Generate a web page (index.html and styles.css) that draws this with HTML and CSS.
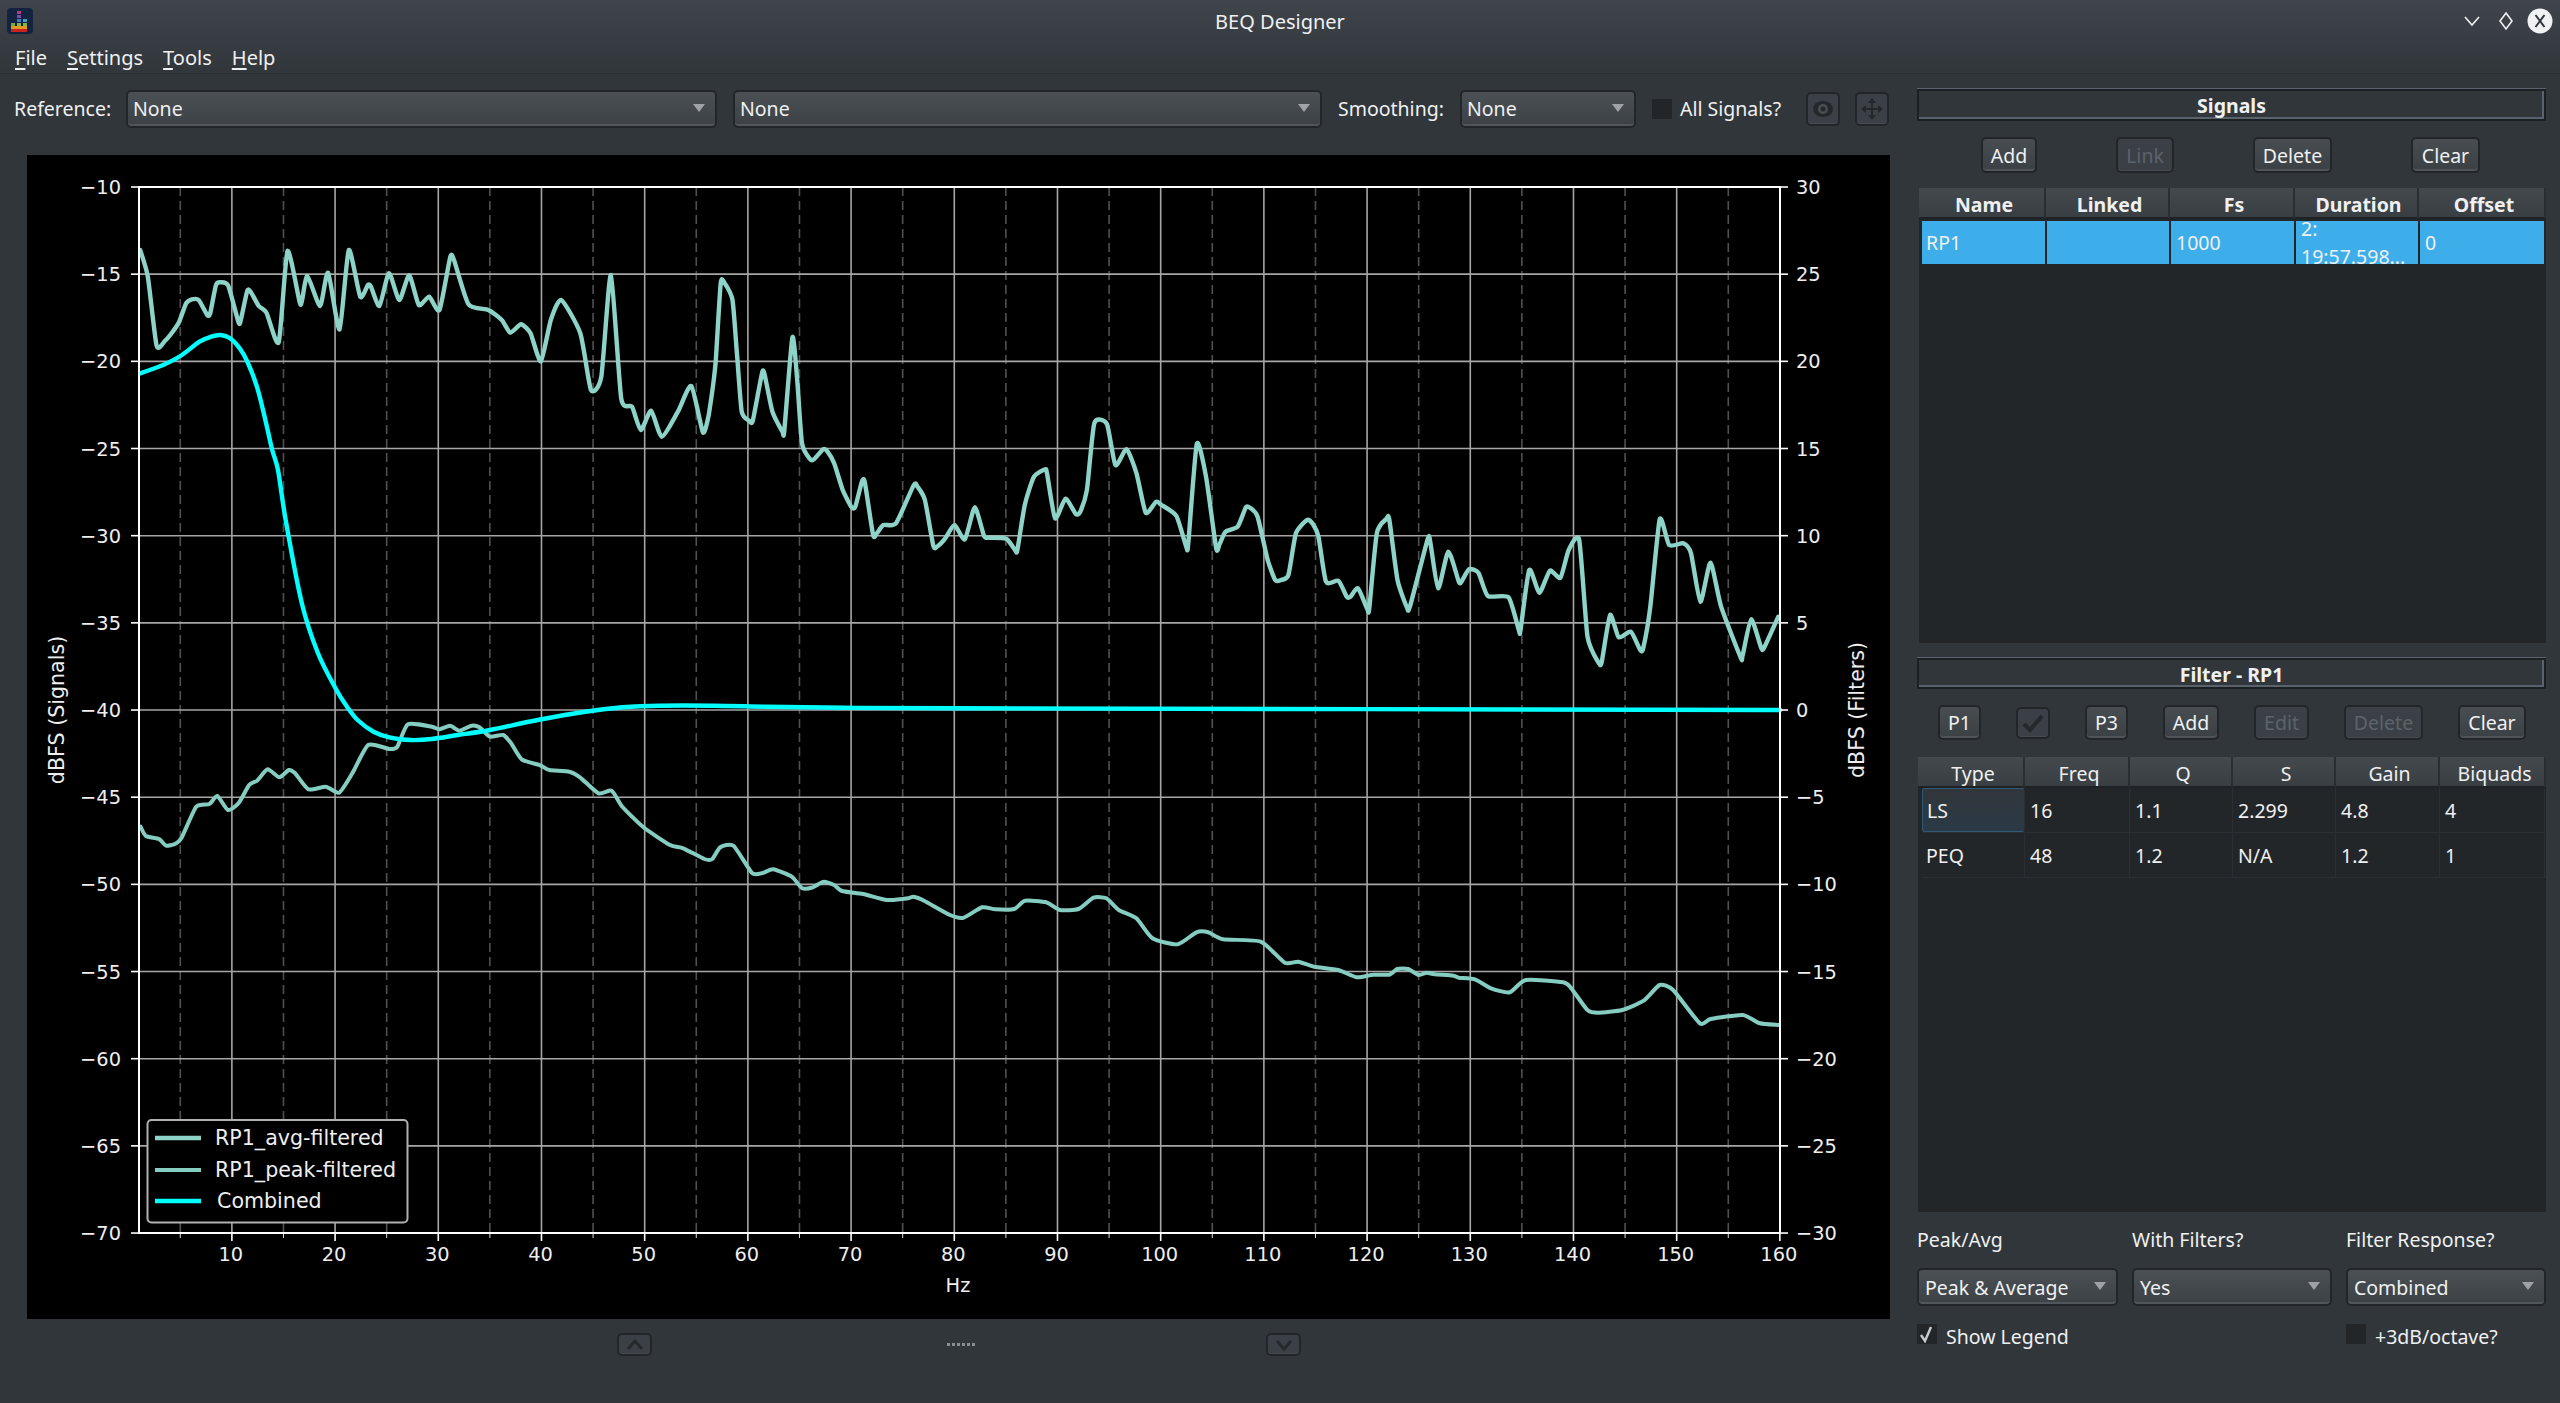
FILE: index.html
```html
<!DOCTYPE html>
<html lang="en">
<head>
  <meta charset="UTF-8" />
  <title>BEQ Designer</title>
  <link rel="stylesheet" href="styles.css">
</head>
<body>
  <div class="app">
    <header class="window-head">
      <div class="titlebar">
        <svg class="app-icon" viewBox="0 0 26 26" width="26" height="26">
          <rect width="26" height="26" rx="4" fill="#14233f"/>
          <rect x="10" y="3" width="4" height="3" fill="#b43a8c"/>
          <rect x="10" y="7" width="4" height="3" fill="#7b4bb0"/>
          <rect x="10" y="11" width="4" height="3" fill="#3f7fc4"/>
          <rect x="16" y="11" width="4" height="3" fill="#3f9fc4"/>
          <rect x="4" y="15" width="4" height="3" fill="#7aa83a"/>
          <rect x="10" y="15" width="4" height="3" fill="#8ab53a"/>
          <rect x="16" y="15" width="4" height="3" fill="#8ab53a"/>
          <rect x="4" y="18" width="16" height="3" fill="#e09a1e"/>
          <rect x="4" y="21" width="16" height="3" fill="#c8231e"/>
        </svg>
        <span class="title">BEQ Designer</span>
        <div class="window-buttons">
          <svg class="wb-min" width="18" height="14" viewBox="0 0 18 14"><path d="M2 3l7 8 7-8" class="wb"/></svg>
          <svg width="16" height="20" viewBox="0 0 16 20"><path d="M8 2l6 8-6 8-6-8z" class="wb"/></svg>
          <svg width="26" height="26" viewBox="0 0 26 26"><circle cx="13" cy="13" r="12.5" fill="#f0f1f2"/><path d="M8.5 7l9 12M17.5 7l-9 12" stroke="#31363b" stroke-width="2" fill="none"/></svg>
        </div>
      </div>
      <nav class="menubar">
        <span><u>F</u>ile</span>
        <span><u>S</u>ettings</span>
        <span><u>T</u>ools</span>
        <span><u>H</u>elp</span>
      </nav>
    </header>

    <div class="main">
      <section class="left">
        <div class="toolbar">
          <label class="ref-label">Reference:</label>
          <div class="combo combo-ref"><span>None</span><i></i></div>
          <div class="combo combo-ref"><span>None</span><i></i></div>
          <label class="smooth-label">Smoothing:</label>
          <div class="combo combo-smooth"><span>None</span><i></i></div>
          <span class="check all-check"></span>
          <label class="all-label">All Signals?</label>
          <button class="btn tool-btn" disabled>
            <svg width="22" height="18" viewBox="0 0 22 18"><ellipse cx="11" cy="9" rx="10" ry="8" fill="#24282b"/><circle cx="11" cy="9" r="5" fill="#4a4f54"/><circle cx="11" cy="9" r="2.5" fill="#24282b"/></svg>
          </button>
          <button class="btn tool-btn move-btn" disabled>
            <svg width="24" height="24" viewBox="0 0 24 24"><path d="M12 1l4 5h-3v5h5V8l5 4-5 4v-3h-5v5h3l-4 5-4-5h3v-5H6v3l-5-4 5-4v3h5V6H8z" fill="#24282b"/></svg>
          </button>
        </div>

        <div class="plot">
          <svg id="chart" viewBox="27 155 1863 1164" width="1863" height="1164"></svg>
        </div>

        <div class="splitter">
          <button class="btn split-btn" disabled><svg width="18" height="12" viewBox="0 0 18 12"><path d="M2 10l7-8 7 8" class="split-arrow"/></svg></button>
          <div class="grip"><b></b><b></b><b></b><b></b><b></b><b></b></div>
          <button class="btn split-btn" disabled><svg width="18" height="12" viewBox="0 0 18 12"><path d="M2 2l7 8 7-8" class="split-arrow"/></svg></button>
        </div>
      </section>

      <aside class="right">
        <h3 class="panel-title">Signals</h3>
        <div class="actions signal-actions">
          <button class="btn b-add">Add</button>
          <button class="btn b-link" disabled>Link</button>
          <button class="btn b-delete">Delete</button>
          <button class="btn b-clear">Clear</button>
        </div>
        <div class="table signals">
          <div class="thead">
            <div>Name</div><div>Linked</div><div>Fs</div><div>Duration</div><div>Offset</div>
          </div>
          <div class="trow selected">
            <div>RP1</div><div></div><div>1000</div><div class="wrap">2:<br>19:57.598...</div><div>0</div>
          </div>
        </div>

        <h3 class="panel-title filter-title">Filter - RP1</h3>
        <div class="actions filter-actions">
          <button class="btn b-p">P1</button>
          <button class="btn b-tick" disabled><svg width="22" height="20" viewBox="0 0 22 20"><path d="M2 11l6 6L20 3" fill="none" stroke="#26292c" stroke-width="4"/></svg></button>
          <button class="btn b-p">P3</button>
          <button class="btn b-add">Add</button>
          <button class="btn b-edit" disabled>Edit</button>
          <button class="btn b-delete" disabled>Delete</button>
          <button class="btn b-clear2">Clear</button>
        </div>
        <div class="table filters">
          <div class="thead">
            <div>Type</div><div>Freq</div><div>Q</div><div>S</div><div>Gain</div><div>Biquads</div>
          </div>
          <div class="trow">
            <div class="current">LS</div><div>16</div><div>1.1</div><div>2.299</div><div>4.8</div><div>4</div>
          </div>
          <div class="trow">
            <div>PEQ</div><div>48</div><div>1.2</div><div>N/A</div><div>1.2</div><div>1</div>
          </div>
        </div>

        <div class="options">
          <label>Peak/Avg</label>
          <label>With Filters?</label>
          <label>Filter Response?</label>
          <div class="combo"><span>Peak &amp; Average</span><i></i></div>
          <div class="combo"><span>Yes</span><i></i></div>
          <div class="combo"><span>Combined</span><i></i></div>
          <div class="check-row">
            <span class="check"><svg width="16" height="18" viewBox="0 0 16 18"><path d="M2 10l4 6L12 2" fill="none" stroke="#c8cacc" stroke-width="2.4"/></svg></span>
            <label>Show Legend</label>
          </div>
          <div></div>
          <div class="check-row">
            <span class="check"></span>
            <label>+3dB/octave?</label>
          </div>
        </div>
      </aside>
    </div>
  </div>
  <script src="chart.js"></script>
</body>
</html>
```

FILE: styles.css
```css
* {
  box-sizing: border-box;
}
html, body {
  margin: 0;
  height: 100%;
  overflow: hidden;
}
body {
  font-family: "Noto Sans", sans-serif;
  font-size: 19.5px;
  color: #eff0f1;
  background: #31363b;
}
.app {
  width: 2560px;
  height: 1403px;
}
label {
  white-space: nowrap;
}

/* window header */
.window-head {
  height: 74px;
  border-bottom: 1px solid #2b2f33;
  background: linear-gradient(#40454c, #31363b);
  font-size: 20px;
}
.titlebar {
  position: relative;
  height: 42px;
  display: flex;
  align-items: center;
  justify-content: center;
}
.app-icon {
  position: absolute;
  left: 7px;
  top: 8px;
}
.window-buttons {
  position: absolute;
  right: 7px;
  top: 8px;
  display: flex;
  align-items: center;
  gap: 13px;
}
.wb-min {
  margin-right: 4px;
}
.wb {
  fill: none;
  stroke: #eff0f1;
  stroke-width: 1.6;
}
.menubar {
  display: flex;
  height: 31px;
  padding-left: 15px;
  gap: 20px;
  align-items: center;
}
.menubar u {
  text-underline-offset: 3px;
}

.main {
  display: flex;
}

/* left side */
.left {
  width: 1890px;
}
.toolbar {
  display: flex;
  align-items: center;
  height: 37px;
  margin-top: 16px;
  padding-left: 14px;
}
.ref-label {
  width: 112px;
}
.smooth-label {
  width: 122px;
  margin-left: 16px;
}
.combo {
  display: flex;
  align-items: center;
  justify-content: space-between;
  height: 38px;
  padding: 0 10px 0 5px;
  border: 2px solid #232629;
  border-radius: 5px;
  background: linear-gradient(#4b5055, #3c4146);
  box-shadow: inset 0 -2px 0 #50565b;
}
.combo i {
  width: 0;
  height: 0;
  border-left: 6px solid transparent;
  border-right: 6px solid transparent;
  border-top: 8px solid #a0a3a6;
  margin-bottom: 2px;
}
.combo-ref {
  width: 591px;
  margin-right: 16px;
}
.combo-ref + .combo-ref {
  width: 589px;
  margin-right: 0;
}
.combo-smooth {
  width: 176px;
}
.check {
  display: inline-flex;
  align-items: center;
  justify-content: center;
  width: 20px;
  height: 20px;
  background: #232629;
  flex: none;
}
.all-check {
  margin-left: 16px;
}
.all-label {
  margin-left: 8px;
  width: 126px;
}
.btn {
  display: inline-flex;
  align-items: center;
  justify-content: center;
  padding: 0;
  font: inherit;
  color: #eff0f1;
  border: 2px solid #232629;
  border-radius: 5px;
  background: linear-gradient(#484d52, #3b4045);
  box-shadow: inset 0 -2px 0 #4e5459;
}
.btn:disabled {
  color: #5c636b;
  background: #3b4046;
  box-shadow: inset 0 -1px 0 #464b51;
}
.tool-btn {
  width: 34px;
  height: 34px;
}
.move-btn {
  margin-left: 15px;
}
.plot {
  margin: 28px 0 0 27px;
  height: 1164px;
  background: #000;
}
#chart {
  display: block;
}
.splitter {
  display: flex;
  align-items: center;
  height: 23px;
  margin: 14px 0 0 617px;
  width: 684px;
  justify-content: space-between;
}
.split-btn {
  width: 35px;
  height: 23px;
}
.split-arrow {
  fill: none;
  stroke: #26292c;
  stroke-width: 3;
}
.grip {
  display: flex;
  gap: 2px;
  margin-left: 4px;
}
.grip b {
  width: 3px;
  height: 3px;
  background: #8b8e91;
}

/* chart */
.grid-major {
  stroke: #a6a6a6;
  stroke-width: 1.6;
}
.grid-minor {
  stroke: #505050;
  stroke-width: 1.6;
  stroke-dasharray: 9 5;
}
.spine {
  fill: none;
  stroke: #fff;
  stroke-width: 2;
}
.tick {
  stroke: #fff;
  stroke-width: 1.6;
}
.tick-minor {
  stroke: #ddd;
  stroke-width: 1;
}
.curve {
  fill: none;
  stroke: #8dd3c7;
  stroke-linejoin: round;
  stroke-linecap: round;
}
.avg {
  stroke-width: 4.4;
}
.peak {
  stroke-width: 4;
  stroke: #84cdc0;
}
.combined {
  stroke: #00ffff;
  stroke-width: 4.4;
}
.legend-box {
  fill: #000;
  stroke: #b0b0b0;
  stroke-width: 2;
}
.chart-text {
  font-family: "DejaVu Sans", sans-serif;
  font-size: 19.4px;
  fill: #eee;
}
.chart-text.large {
  font-size: 20.6px;
}

/* right side */
.right {
  width: 629px;
  margin-left: 27px;
  padding-top: 15px;
}
.panel-title {
  height: 32px;
  margin: 0;
  font-size: 19.5px;
  font-weight: 700;
  line-height: 29px;
  text-align: center;
  border: 2px solid #1d2023;
  box-shadow: 0 -1px 0 #59636d, inset -2px -2px 0 #59636d;
}
.filter-title {
  height: 31px;
  margin-top: 15px;
}
.actions {
  display: flex;
  height: 36px;
  margin-top: 16px;
}
.signal-actions {
  padding-left: 64px;
  gap: 79px;
}
.filter-actions {
  height: 35px;
  padding-left: 21px;
  gap: 35px;
}
.actions .btn {
  height: 100%;
}
.b-add {
  width: 56px;
}
.b-link {
  width: 58px;
}
.b-delete {
  width: 79px;
}
.b-clear {
  width: 69px;
}
.b-clear2 {
  width: 68px;
}
.b-p {
  width: 43px;
}
.b-tick {
  width: 34px;
  margin: 2px 0;
  height: 32px !important;
}
.b-edit {
  width: 55px;
}
.table {
  height: 455px;
  margin-top: 15px;
  background: #232629;
  overflow: hidden;
}
.signals {
  margin-left: 2px;
}
.filters {
  margin-left: 1px;
  margin-top: 17px;
}
.thead, .trow {
  display: grid;
}
.thead {
  height: 31px;
  border-bottom: 2px solid #1f2225;
  background: linear-gradient(#44494e, #393e43);
}
.thead > div {
  display: flex;
  align-items: center;
  justify-content: center;
  padding: 3px 0 0 5px;
  border-right: 2px solid #2a2e32;
}
.signals .thead {
  grid-template-columns: 127px 124px 125px 124px 127px;
  font-weight: 700;
}
.filters .thead {
  grid-template-columns: 107px 105px 103px 103px 104px 106px;
}
.trow > div {
  display: flex;
  align-items: center;
  padding-left: 5px;
  overflow: hidden;
}
.trow > div:first-child {
  padding-left: 4px;
}
.signals .trow {
  grid-template-columns: 125px 124px 125px 124px 126px;
  height: 43px;
  margin: 2px 0 0 3px;
}
.selected > div {
  background: #3daee9;
  border-right: 2px solid #232629;
  color: #eff0f1;
}
.wrap {
  line-height: 28px;
  white-space: nowrap;
}
.filters .trow {
  grid-template-columns: 103px 105px 103px 103px 104px 105px;
  height: 45px;
  margin-left: 4px;
  border-bottom: 1px solid #2b2f33;
}
.filters .trow > div {
  border-right: 1px solid #2b2f33;
}
.filters .current {
  border: 1px solid #2e5a75;
  border-radius: 3px;
  background: linear-gradient(#31363b, #2a3a46);
}
.options {
  display: grid;
  grid-template-columns: 201px 200px 200px;
  column-gap: 14px;
  grid-template-rows: 28px 38px 20px;
  row-gap: 14px;
  margin-top: 14px;
}
.options .combo {
  padding-left: 6px;
}
.check-row {
  display: flex;
  align-items: center;
  gap: 9px;
  margin-top: 7px;
}
.check-row label {
  padding-top: 6px;
}
```

FILE: chart.js
```js
const svg = document.getElementById("chart");
const NS = "http://www.w3.org/2000/svg";

const plotLeft = 139, plotRight = 1780, plotTop = 187, plotBottom = 1233;

function xAt(hz) {
  return plotLeft + (hz - 1) * 10.32;
}
function yAt(step) {
  return plotTop + step * 87.17;
}

function add(tag, attrs, text) {
  const el = document.createElementNS(NS, tag);
  for (const k in attrs) el.setAttribute(k, attrs[k]);
  if (text !== undefined) el.textContent = text;
  svg.appendChild(el);
  return el;
}
function line(x1, y1, x2, y2, cls) {
  add("line", { x1, y1, x2, y2, class: cls });
}
function label(x, y, text, anchor, extra) {
  const cls = extra ? "chart-text " + extra : "chart-text";
  return add("text", { x, y, class: cls, "text-anchor": anchor || "middle" }, text);
}

// grid
for (let hz = 5; hz < 160; hz += 10) line(xAt(hz), plotTop, xAt(hz), plotBottom, "grid-minor");
for (let hz = 10; hz < 160; hz += 10) line(xAt(hz), plotTop, xAt(hz), plotBottom, "grid-major");
for (let i = 1; i < 12; i++) line(plotLeft, yAt(i), plotRight, yAt(i), "grid-major");

// curves, points read from pieces of the picture: [x0, y0, x scale, points]
const avgPieces = [
  [100, 170, 2.613, [105,240,125,320,148,527,170,512,190,485,207,455,225,400,240,388,258,390,280,435,288,430,303,345,315,337,335,347,362,457,368,450,385,362,395,368,415,408,435,428,467,517,490,243,522,398,528,390,542,318,575,408,596,308,626,478,650,240,680,380,700,345,708,350,730,408,755,310,782,390,808,316,833,405,860,380,887,420,915,262,925,270,963,403,1015,420,1050,450,1072,488,1100,463,1125,490,1152,574,1178,450,1205,390,1255,490,1283,660,1310,620,1335,315,1362,685,1390,710,1413,780,1440,722,1468,800,1510,725,1545,648]],
  [640, 260, 2.703, [170,517,185,470,197,380,205,300,218,70,228,68,250,120,262,280,275,455,295,482,305,482,330,338,337,345,358,455,385,515,390,512,412,232,425,360,438,550,460,598,470,598,495,568,505,572,525,610,548,690,572,742,582,740,600,664,608,668,630,825,640,820,658,795,692,790,740,675,750,680,770,720,793,858,805,858,825,835,850,795,878,838,905,742,930,828,945,833,990,836,1015,872,1020,870,1040,735,1065,650,1095,628,1100,640,1122,775,1150,716,1178,762,1190,755,1208,690,1228,490,1262,492,1285,615,1315,568,1342,640,1367,758,1395,725,1410,735,1450,768,1477,862,1482,850,1505,552,1530,650]],
  [1200, 400, 2.658, [43,445,52,432,68,395,100,380,122,322,135,325,153,350,180,480,200,540,215,540,235,525,255,400,285,360,300,372,315,410,335,545,368,542,390,590,400,590,420,565,445,628,450,625,470,400,495,357,503,357,525,540,550,622,558,620,605,418,612,425,633,565,660,455,688,545,695,545,715,508,740,518,765,588,820,592,848,692,852,690,875,510,902,578,930,512,958,533,980,450,1008,420,1030,710,1060,790,1068,785,1090,645,1113,712,1145,695,1170,750,1178,745,1197,620,1222,358,1247,435,1285,430,1305,460,1330,605,1357,488,1385,620,1437,772,1442,768,1465,658,1492,745,1500,742,1537,650]]
];
const peakPieces = [
  [130, 690, 1.889, [20,410,30,438,55,447,68,467,85,462,97,445,125,350,150,342,165,318,185,360,205,340,225,285,240,272,260,238,282,262,300,240,312,250,337,298,370,290,395,308,420,250,450,165,490,177,505,170,525,103,570,110,585,118,605,107,622,122,645,107,660,112,680,140,705,135,720,160,740,208,775,226,792,240,830,245,850,262,885,310,910,302,930,350,970,412,1020,465,1045,475,1085,507,1100,507,1115,472,1140,467,1175,549,1195,549,1215,538,1250,560,1270,595,1290,592,1310,575,1330,585,1345,603,1385,612,1430,630,1470,625,1480,620,1500,632]],
  [950, 860, 1.867, [0,165,25,173,60,142,85,148,120,147,140,122,180,127,205,150,240,147,268,113,292,115,315,150,348,175,378,235,425,253,460,217,482,217,510,238,580,245,625,308,650,305,680,320,725,330,760,352,790,344,820,344,835,327,855,327,875,345,890,338,905,343,940,347,950,353,980,358,1010,385,1045,397,1075,360,1145,367,1160,385,1190,450,1210,458,1255,450,1295,422,1325,375,1350,390,1400,490,1420,477,1480,465,1512,490,1548,495]]
];
const combinedPieces = [
  [100, 170, 2.613, [105,610,130,600,165,585,210,558,260,515,290,500,315,495,340,505,365,535,385,575,410,650,430,740,450,840,465,900]],
  [130, 690, 1.889, [295,-501,325,-258,355,-111,390,0,410,50,430,90,460,125,490,142,530,150,570,147,620,135,680,120,770,90,860,65,930,52,1000,47,1100,47,1200,50,1350,53,1568,55,3117,60]]
];

function toPath(pieces, k) {
  const p = [];
  for (const [x0, y0, sx, pts] of pieces) {
    for (let i = 0; i < pts.length; i += 2) {
      p.push([x0 + pts[i] / sx, y0 + pts[i + 1] / 3]);
    }
  }
  let d = "M" + p[0][0].toFixed(1) + " " + p[0][1].toFixed(1);
  for (let i = 0; i < p.length - 1; i++) {
    const a = p[i - 1] || p[i], b = p[i], c = p[i + 1], e = p[i + 2] || c;
    const c1x = b[0] + (c[0] - a[0]) * k, c1y = b[1] + (c[1] - a[1]) * k;
    const c2x = c[0] - (e[0] - b[0]) * k, c2y = c[1] - (e[1] - b[1]) * k;
    d += "C" + [c1x, c1y, c2x, c2y, c[0], c[1]].map(n => n.toFixed(1)).join(" ");
  }
  return d;
}
add("path", { d: toPath(avgPieces, 0.1), class: "curve avg" });
add("path", { d: toPath(peakPieces, 0.1), class: "curve peak" });
add("path", { d: toPath(combinedPieces, 0.16), class: "curve combined" });

// ticks and labels
for (let hz = 10; hz <= 160; hz += 10) {
  line(xAt(hz), plotBottom, xAt(hz), plotBottom + 8, "tick");
  label(xAt(hz) - 1, 1261, hz);
}
for (let hz = 5; hz < 160; hz += 10) line(xAt(hz), plotBottom, xAt(hz), plotBottom + 5, "tick-minor");
for (let i = 0; i <= 12; i++) {
  line(plotLeft - 8, yAt(i), plotLeft, yAt(i), "tick");
  line(plotRight, yAt(i), plotRight + 8, yAt(i), "tick");
  label(121, yAt(i) + 7, "\u2212" + (10 + i * 5), "end");
  const v = 30 - i * 5;
  label(1796, yAt(i) + 7, v < 0 ? "\u2212" + -v : v, "start");
}
add("rect", { x: plotLeft, y: plotTop, width: plotRight - plotLeft, height: plotBottom - plotTop, class: "spine" });

label(958, 1292, "Hz");
label(0, 0, "dBFS (Signals)", "middle", "large").setAttribute("transform", "translate(64 710) rotate(-90)");
label(0, 0, "dBFS (Filters)", "middle", "large").setAttribute("transform", "translate(1864 710) rotate(-90)");

// legend
add("rect", { x: 147.5, y: 1120, width: 260, height: 102.5, rx: 4, class: "legend-box" });
const legend = [
  ["RP1_avg-filtered", "avg", 1138, 215, 1145],
  ["RP1_peak-filtered", "peak", 1170, 215, 1177],
  ["Combined", "combined", 1201, 217, 1208]
];
for (const [name, cls, ly, tx, by] of legend) {
  add("line", { x1: 155, y1: ly, x2: 201, y2: ly, class: "curve " + cls, style: "stroke-linecap:butt" });
  label(tx, by, name, "start", "large");
}
```
